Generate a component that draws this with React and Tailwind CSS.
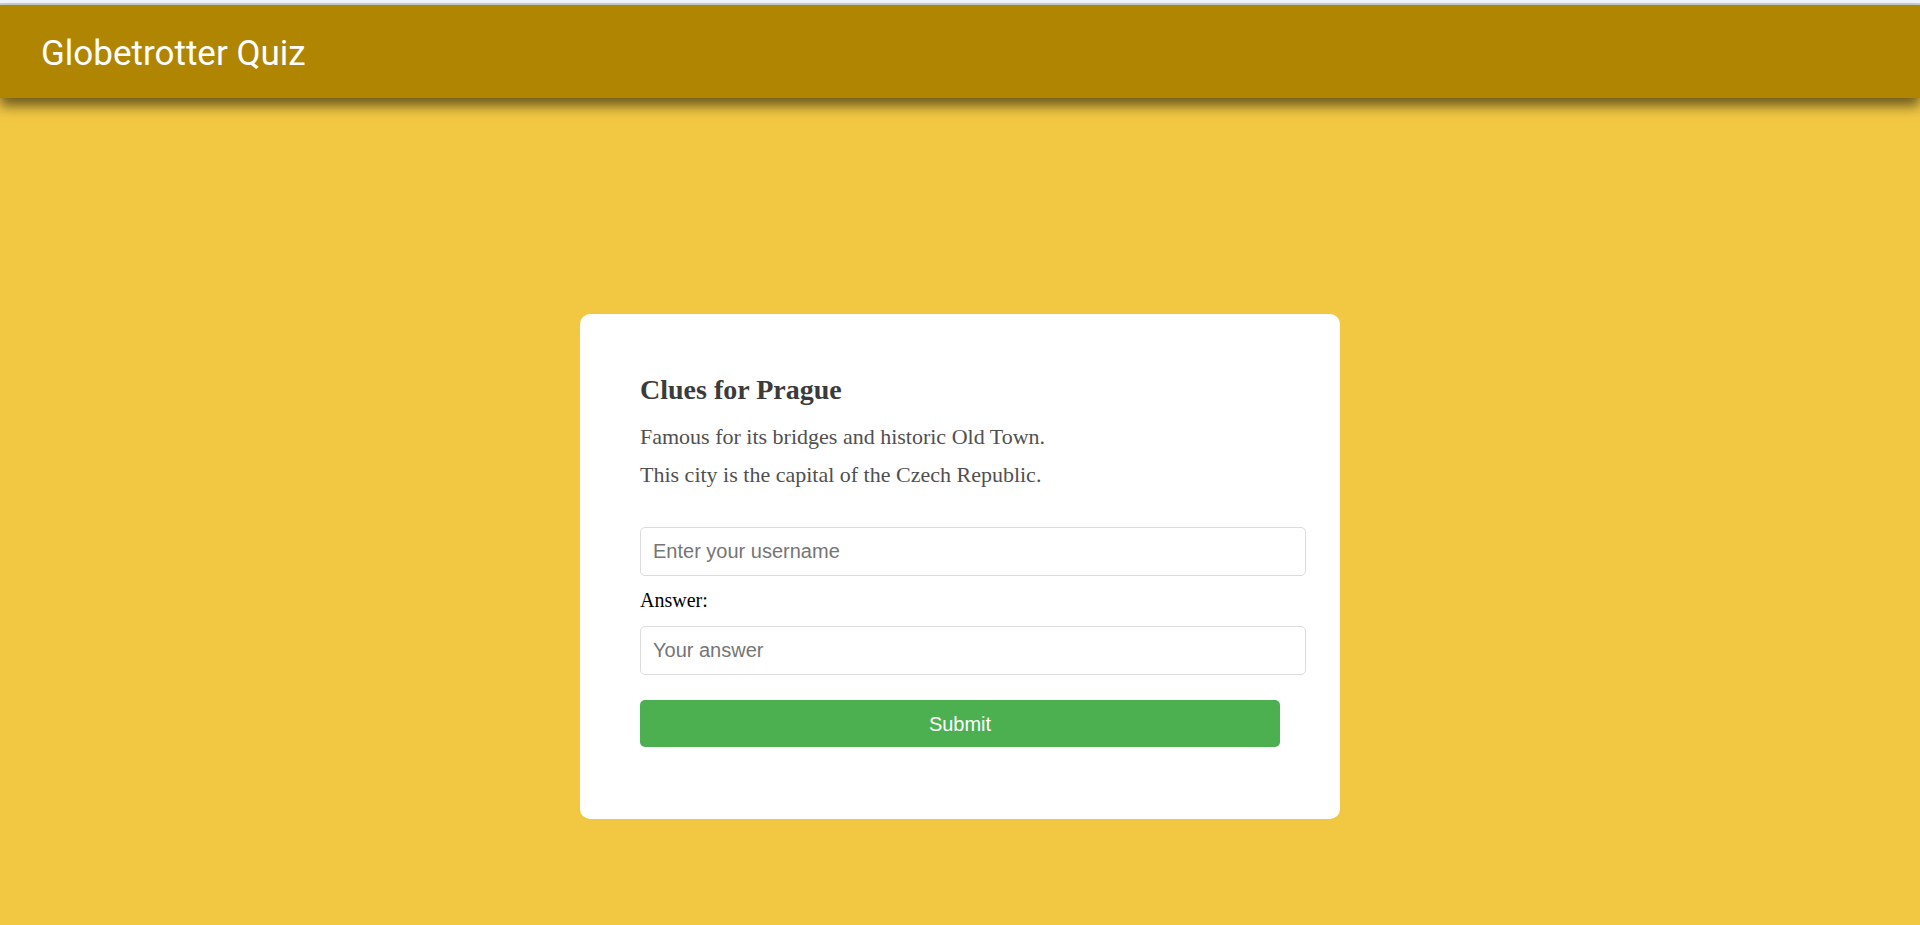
import React from 'react';

const App = () => {
  return (
    <div className="min-h-screen bg-[#f2c843] flex flex-col">
      {/* Browser strip */}
      <div className="h-[5px] bg-[#f1f6fc] border-b-2 border-[#c9ced3]"></div>

      {/* Header */}
      <header className="h-[93px] bg-[#af8502] flex items-center pl-[41px] pt-[4px] shadow-[0_8px_12px_rgba(0,0,0,0.55)] relative z-10">
        <h1 className="text-[35px] text-white font-['Roboto',sans-serif] font-normal leading-none">
          Globetrotter Quiz
        </h1>
      </header>

      {/* Quiz card */}
      <main className="flex justify-center pt-[216px]">
        <div className="w-[760px] bg-white rounded-[10px] px-[60px] pt-[60px] pb-[72px] font-['Liberation_Serif',serif]">
          <h2 className="text-[28px] leading-[31px] font-bold text-[#3b3b3b]">Clues for Prague</h2>
          <p className="mt-[20px] text-[22px] leading-[24px] text-[#505050]">
            Famous for its bridges and historic Old Town.
          </p>
          <p className="mt-[14px] text-[22px] leading-[24px] text-[#505050]">
            This city is the capital of the Czech Republic.
          </p>

          <form className="mt-[40px]" onSubmit={(e) => e.preventDefault()}>
            <input
              type="text"
              placeholder="Enter your username"
              className="box-content block w-full px-3 py-[12px] border border-[#dcdcdc] rounded-[5px] text-[20px] leading-[23px] font-['Liberation_Sans',sans-serif] placeholder:text-[#757575] outline-none"
            />
            <label className="block mt-[13px] text-[20px] leading-[22px] text-black">Answer:</label>
            <input
              type="text"
              placeholder="Your answer"
              className="box-content block w-full mt-[15px] px-3 py-[12px] border border-[#dcdcdc] rounded-[5px] text-[20px] leading-[23px] font-['Liberation_Sans',sans-serif] placeholder:text-[#757575] outline-none"
            />
            <button
              type="submit"
              className="block w-full mt-[25px] h-[47px] bg-[#4caf50] text-white rounded-[5px] text-[20px] font-['Liberation_Sans',sans-serif]"
            >
              Submit
            </button>
          </form>
        </div>
      </main>
    </div>
  );
};

export default App;
